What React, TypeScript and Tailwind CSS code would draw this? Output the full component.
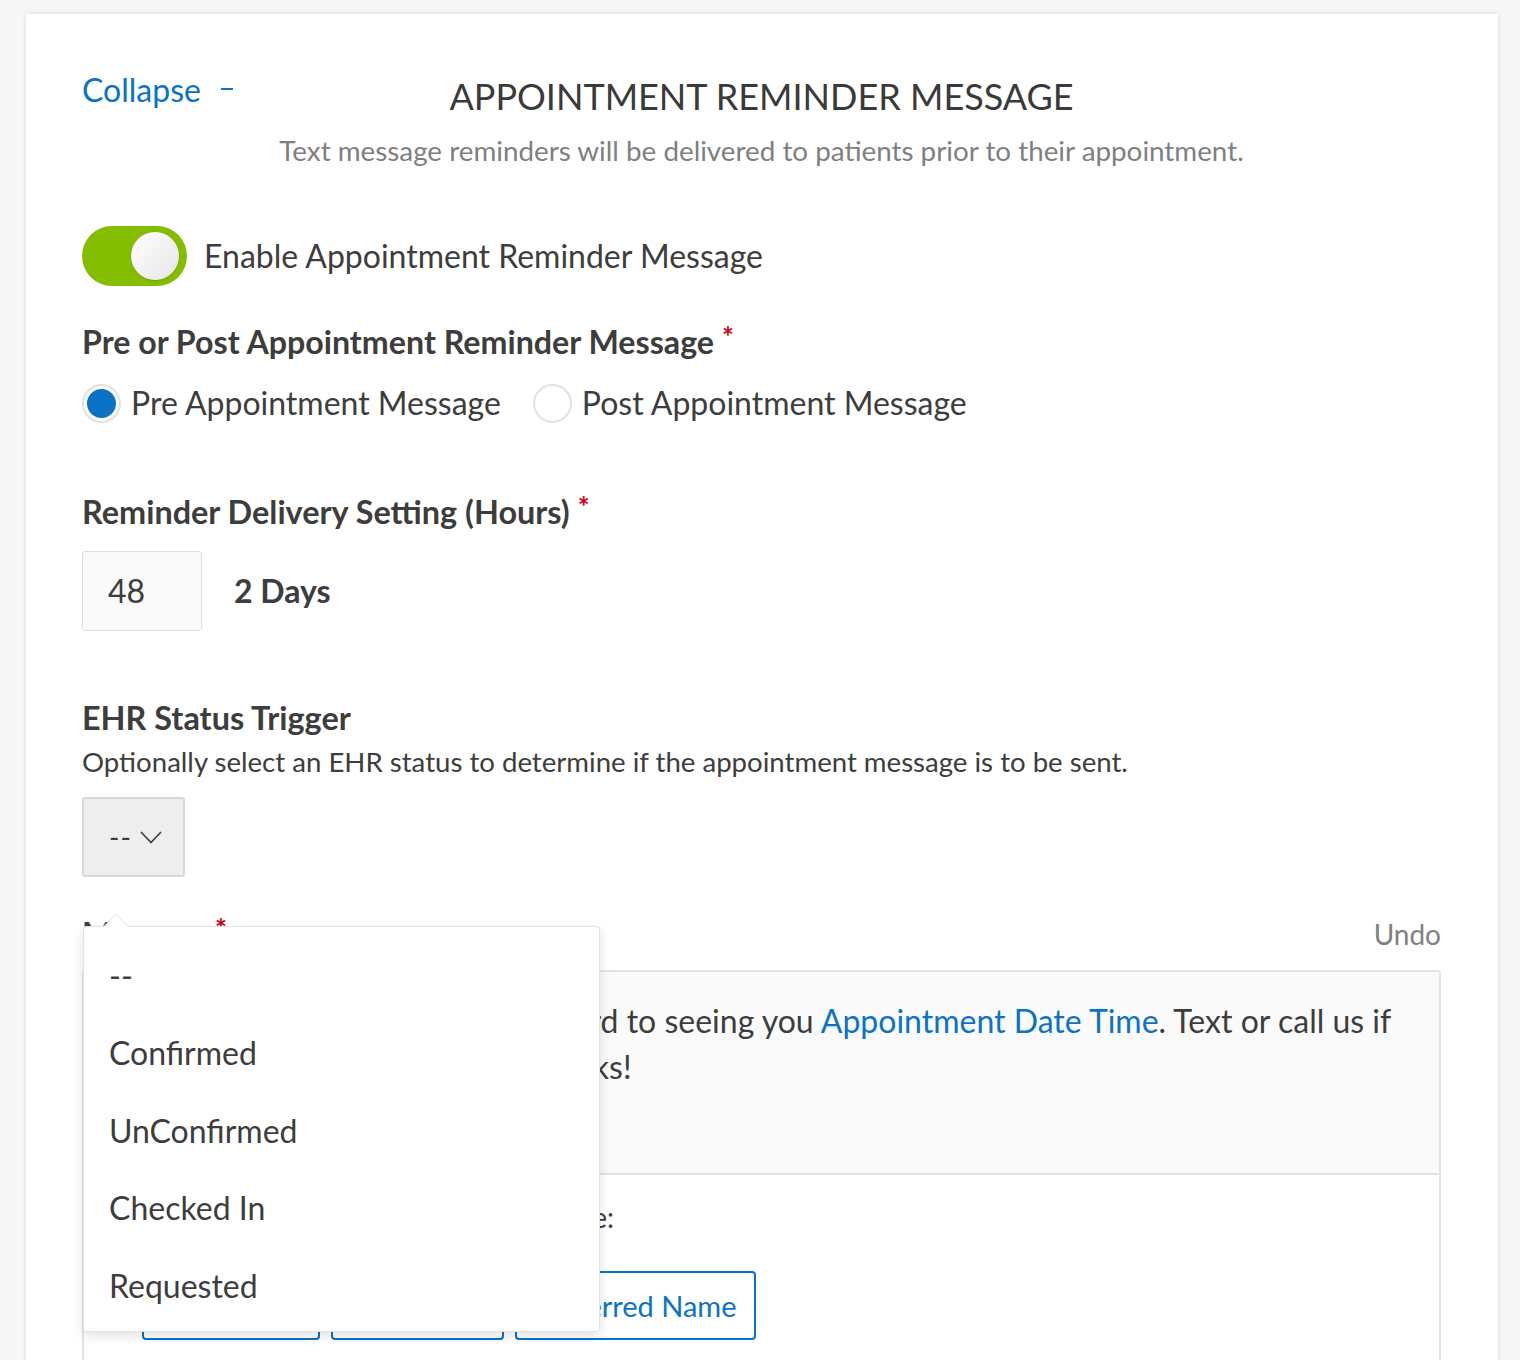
const statuses = ['--', 'Confirmed', 'UnConfirmed', 'Checked In', 'Requested']

const firstRow = [
  { label: 'First Name', w: 'w-[178px]' },
  { label: 'Last Name', w: 'w-[173px]' },
  { label: 'Preferred Name', w: 'w-[241px]' },
]

const secondRow = [
  { label: 'Practice Name', w: 'w-[269px]' },
  { label: 'Appointment Date Time', w: 'w-[338px]' },
  { label: 'Provider Name', w: 'w-[270px]' },
  { label: 'Practice Phone', w: 'w-[272px]' },
]

function Required() {
  return <span className="ml-[8px] text-[28px] leading-none text-[#d0021b] relative -top-[6px]">*</span>
}

export default function App() {
  return (
    <div className="min-h-[1360px] bg-[#f7f7f7] pt-[14px] font-['Lato',sans-serif] text-[#3d3d3d]">
      <div className="ml-[26px] mr-[22px] bg-white shadow-[0_0_6px_rgba(0,0,0,0.12)] pl-[56px] pr-[57px] pt-[56px] pb-[60px]">
        {/* Header */}
        <div className="grid grid-cols-[1fr_auto_1fr] items-start">
          <button className="flex items-center gap-[20px] text-[32px] leading-[40px] text-[#0b72c6]">
            Collapse
            <span className="w-[12px] h-[2px] bg-[#0b72c6] -mt-[2px]" />
          </button>
          <h1 className="mt-[4px] text-[36px] leading-[44px] font-normal text-[#3a3a3a]">
            APPOINTMENT REMINDER MESSAGE
          </h1>
          <div />
        </div>
        <p className="mt-[15px] text-center text-[27.8px] leading-[36px] text-[#7f7f7f]">
          Text message reminders will be delivered to patients prior to their appointment.
        </p>

        {/* Toggle */}
        <div className="mt-[57px] flex items-center gap-[17px]">
          <div className="w-[105px] h-[60px] rounded-full bg-[#84bc00] flex items-center justify-end pr-[8px]">
            <div className="w-[48px] h-[48px] rounded-full bg-gradient-to-br from-white to-[#e6e6e6] shadow-[0_1px_2px_rgba(0,0,0,0.15)]" />
          </div>
          <span className="text-[32px] leading-[40px]">Enable Appointment Reminder Message</span>
        </div>

        {/* Pre / Post */}
        <div className="mt-[36px] flex items-center text-[32.2px] leading-[40px] font-bold">
          Pre or Post Appointment Reminder Message
          <Required />
        </div>
        <div className="mt-[21px] flex items-center h-[40px] text-[32px]">
          <div className="w-[39px] h-[39px] rounded-full border-2 border-[#e2e2e2] bg-white flex items-center justify-center">
            <div className="w-[29px] h-[29px] rounded-full bg-[#0b72c6]" />
          </div>
          <span className="ml-[10px]">Pre Appointment Message</span>
          <div className="ml-[32px] w-[39px] h-[39px] rounded-full border-2 border-[#e2e2e2] bg-white" />
          <span className="ml-[10px]">Post Appointment Message</span>
        </div>

        {/* Delivery setting */}
        <div className="mt-[69px] flex items-center text-[32.4px] leading-[40px] font-bold">
          Reminder Delivery Setting (Hours)
          <Required />
        </div>
        <div className="mt-[19px] flex items-center gap-[32px]">
          <div className="w-[120px] h-[80px] rounded-[3px] border border-[#dedede] bg-[#fafafa] flex items-center pl-[25px] text-[32px]">
            48
          </div>
          <span className="text-[32px] font-bold">2 Days</span>
        </div>

        {/* EHR trigger */}
        <div className="mt-[67px] text-[32.4px] leading-[40px] font-bold">EHR Status Trigger</div>
        <p className="mt-[6px] text-[27.6px] leading-[36px]">
          Optionally select an EHR status to determine if the appointment message is to be sent.
        </p>
        <div className="relative mt-[17px]">
          <div className="w-[103px] h-[80px] rounded-[3px] border-2 border-[#d8d8d8] bg-[#eeeeee] flex items-center pl-[25px] gap-[8px] text-[28px]">
            <span className="tracking-[1px]">--</span>
            <svg width="22" height="13" viewBox="0 0 22 13" fill="none">
              <path d="M1 1 L11 11.5 L21 1" stroke="#444" strokeWidth="1.8" />
            </svg>
          </div>

          {/* Dropdown menu */}
          <div className="absolute z-10 left-[1px] top-[129px] w-[517px] h-[406px] bg-white border border-[#e3e3e3] rounded-[3px] shadow-[0_4px_12px_rgba(0,0,0,0.12)] pt-[10px]">
            <svg className="absolute -top-[14px] left-[19px]" width="26" height="15" viewBox="0 0 26 15">
              <path d="M0 14.5 L13 1 L26 14.5" fill="white" stroke="#e3e3e3" strokeWidth="1" />
              <rect x="1" y="14" width="24" height="2" fill="white" />
            </svg>
            {statuses.map((s) => (
              <div key={s} className="h-[77.5px] flex items-center pl-[25px] text-[32px]">
                {s}
              </div>
            ))}
          </div>
        </div>

        {/* Message */}
        <div className="mt-[37px] flex items-center justify-between">
          <div className="flex items-center text-[32px] leading-[40px] font-bold">
            Message
            <Required />
          </div>
          <button className="text-[28px] leading-[40px] text-[#808080]">Undo</button>
        </div>
        <div className="mt-[16px] border-2 border-[#e2e2e2] rounded-[3px]">
          <div className="h-[203px] bg-[#fafafa] border-b-2 border-[#e2e2e2] pl-[29px] pr-[20px] pt-[26px] text-[32px] leading-[46px] whitespace-nowrap">
            <span className="text-[#0b72c6]">Patient First Name</span>, we look forward to seeing you{' '}
            <span className="text-[#0b72c6]">Appointment Date Time</span>. Text or call us if
            <br />
            you have any questions. Kind thanks!
          </div>
          <div className="px-[58px] pt-[22px] pb-[30px]">
            <p className="ml-[7px] text-[28px] leading-[40px]">Click on a field to add to the message:</p>
            <div className="mt-[34px] flex flex-wrap gap-x-[11px] gap-y-[17px]">
              {firstRow.map((b) => (
                <button
                  key={b.label}
                  className={`${b.w} h-[69px] border-2 border-[#0b72c6] rounded-[4px] text-[29px] text-[#0b72c6] flex items-center justify-center`}
                >
                  {b.label}
                </button>
              ))}
              <div className="basis-full h-0" />
              {secondRow.map((b) => (
                <button
                  key={b.label}
                  className={`${b.w} h-[69px] border-2 border-[#0b72c6] rounded-[4px] text-[29px] text-[#0b72c6] flex items-center justify-center`}
                >
                  {b.label}
                </button>
              ))}
            </div>
          </div>
        </div>
      </div>
    </div>
  )
}
